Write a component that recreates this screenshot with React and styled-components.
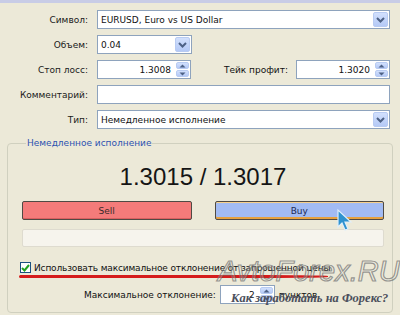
import React from 'react';
import styled, { createGlobalStyle } from 'styled-components';

const GlobalStyle = createGlobalStyle`
  html, body { margin: 0; padding: 0; }
  body {
    background: #ece9d8;
    font-family: "DejaVu Sans", Tahoma, sans-serif;
    font-size: 9px;
    color: #111;
  }
`;

const Window = styled.div`
  position: relative;
  width: 400px;
  height: 315px;
  overflow: hidden;
  background: #ece9d8;
  display: flex;
  flex-direction: column;
`;

const TopStrip = styled.div`
  height: 3px;
  flex-shrink: 0;
  background: #c8cce6;
`;

// верхняя форма: подписи справа, поля слева
const Form = styled.div`
  display: grid;
  grid-template-columns: 88px 1fr;
  column-gap: 9px;
  row-gap: 6px;
  padding: 7px 10px 0 0;
`;

const Label = styled.div`
  text-align: right;
  align-self: center;
  white-space: nowrap;
  color: #1a1a1a;
`;

const Field = styled.div`
  display: flex;
  align-items: center;
  box-sizing: border-box;
  height: 19px;
  flex-shrink: 0;
  width: ${p => (p.$w ? `${p.$w}px` : 'auto')};
  border: 1px solid #8ea3bd;
  background: #fff;
  padding: 0 1px 0 3px;
`;

const FieldText = styled.span`
  flex: 1;
  white-space: nowrap;
  overflow: hidden;
  text-align: ${p => (p.$right ? 'right' : 'left')};
  padding-right: ${p => (p.$right ? '5px' : '0')};
`;

const DropButton = styled.div`
  width: 15px;
  height: 15px;
  box-sizing: border-box;
  border: 1px solid #b8cbf2;
  border-radius: 2px;
  background: linear-gradient(#d2e0fd, #b4c9f6);
  display: flex;
  align-items: center;
  justify-content: center;
`;

const Spin = styled.div`
  width: 13px;
  height: 15px;
  display: flex;
  flex-direction: column;
  gap: 1px;
`;

const SpinHalf = styled.div`
  flex: 1;
  border: 1px solid #b8cbf2;
  border-radius: 2px;
  background: linear-gradient(#d2e0fd, #b4c9f6);
  display: flex;
  align-items: center;
  justify-content: center;
`;

const Pair = styled.div`
  display: flex;
  align-items: center;
`;

const InlineLabel = styled.div`
  flex: 1;
  text-align: right;
  padding-right: 8px;
  white-space: nowrap;
`;

// группа "Немедленное исполнение"
const Group = styled.fieldset`
  margin: 9px 7px 2px 7px;
  padding: 0 8px 0 14px;
  flex: 1;
  min-height: 0;
  border: 1px solid #d0d0bf;
  border-radius: 4px;
  min-width: 0;
  display: flex;
  flex-direction: column;
`;

const Caption = styled.legend`
  color: #2c52b0;
  padding: 0 1px;
  margin-left: 4px;
`;

const Price = styled.div`
  margin-top: 15px;
  text-align: center;
  font-family: "Liberation Sans", Arial, sans-serif;
  font-size: 24px;
  line-height: 28px;
  color: #151515;
`;

const Buttons = styled.div`
  display: grid;
  grid-template-columns: 1fr 1fr;
  column-gap: 23px;
  margin-top: 10px;
`;

const TradeButton = styled.div`
  height: 19px;
  box-sizing: border-box;
  border: 1px solid #4f4a44;
  border-radius: 2px;
  display: flex;
  align-items: center;
  justify-content: center;
  background: ${p => p.$bg};
  color: ${p => p.$fg};
  box-shadow: ${p => (p.$hover ? 'inset 0 -2px 0 #e6a13f, inset 0 1px 0 #f6d08c' : 'inset 0 -1px 0 #d86060')};
`;

const EmptyBar = styled.div`
  height: 18px;
  flex-shrink: 0;
  margin-top: 9px;
  box-sizing: border-box;
  border: 1px solid #dedbcf;
  border-radius: 2px;
  background: #f6f4ed;
`;

const CheckRow = styled.div`
  display: flex;
  align-items: center;
  gap: 3px;
  margin: 15px 0 0 -2px;
  letter-spacing: -0.15px;
`;

const CheckBox = styled.div`
  width: 11px;
  height: 11px;
  box-sizing: border-box;
  border: 1px solid #1c5180;
  background: #fff;
  display: flex;
  align-items: center;
  justify-content: center;
`;

const RedLine = styled.div`
  width: 309px;
  height: 3px;
  flex-shrink: 0;
  margin: 2px 0 0 -3px;
  border-radius: 2px 40% 40% 2px;
  background: #d51c1c;
`;

const DeviationRow = styled.div`
  display: flex;
  align-items: center;
  gap: 4px;
  margin: 7px 0 0 62px;
`;

const Watermark = styled.div`
  position: absolute;
  left: 218px;
  top: 255px;
  font-family: "Liberation Sans", Arial, sans-serif;
  font-style: italic;
  font-size: 29px;
  line-height: 32px;
  color: rgba(255, 255, 255, 0.2);
  -webkit-text-stroke: 1.2px rgba(110, 110, 110, 0.7);
  pointer-events: none;
`;

const Slogan = styled.div`
  position: absolute;
  left: 231px;
  top: 291px;
  font-family: "Liberation Serif", "Times New Roman", serif;
  font-style: italic;
  font-weight: bold;
  font-size: 12.5px;
  color: #4b4f5c;
  pointer-events: none;
`;

const Cursor = styled.svg`
  position: absolute;
  left: 336px;
  top: 208px;
`;

const Chevron = () => (
  <svg width="9" height="6" viewBox="0 0 9 6">
    <path d="M1 1 L4.5 4.5 L8 1" fill="none" stroke="#4d6185" strokeWidth="2" />
  </svg>
);

const Arrow = ({ up }) => (
  <svg width="7" height="4" viewBox="0 0 7 4">
    <path d={up ? 'M0.5 3.5 L3.5 0.5 L6.5 3.5 Z' : 'M0.5 0.5 L3.5 3.5 L6.5 0.5 Z'} fill="#4d6185" />
  </svg>
);

const Combo = ({ value, w }) => (
  <Field $w={w}>
    <FieldText>{value}</FieldText>
    <DropButton><Chevron /></DropButton>
  </Field>
);

const Spinner = ({ value, w }) => (
  <Field $w={w}>
    <FieldText $right>{value}</FieldText>
    <Spin>
      <SpinHalf><Arrow up /></SpinHalf>
      <SpinHalf><Arrow /></SpinHalf>
    </Spin>
  </Field>
);

const App = () => (
  <Window>
    <GlobalStyle />
    <TopStrip />

    <Form>
      <Label>Символ:</Label>
      <Combo value="EURUSD, Euro vs US Dollar" />

      <Label>Объем:</Label>
      <Combo value="0.04" w={95} />

      <Label>Стоп лосс:</Label>
      <Pair>
        <Spinner value="1.3008" w={94} />
        <InlineLabel>Тейк профит:</InlineLabel>
        <Spinner value="1.3020" w={94} />
      </Pair>

      <Label>Комментарий:</Label>
      <Field />

      <Label>Тип:</Label>
      <Combo value="Немедленное исполнение" />
    </Form>

    <Group>
      <Caption>Немедленное исполнение</Caption>
      <Price>1.3015 / 1.3017</Price>
      <Buttons>
        <TradeButton $bg="#f47b7a" $fg="#3a2a2a">Sell</TradeButton>
        <TradeButton $bg="#a2bbf3" $fg="#1d2a55" $hover>Buy</TradeButton>
      </Buttons>
      <EmptyBar />
      <CheckRow>
        <CheckBox>
          <svg width="9" height="8" viewBox="0 0 9 8">
            <path d="M1 4 L3.5 6.5 L8 1" fill="none" stroke="#21a221" strokeWidth="2" />
          </svg>
        </CheckBox>
        <span>Использовать максимальное отклонение от запрошенной цены</span>
      </CheckRow>
      <RedLine />
      <DeviationRow>
        <span>Максимальное отклонение:</span>
        <Spinner value="2" w={55} />
        <span>пунктов</span>
      </DeviationRow>
    </Group>

    <Watermark>AvtoForex.RU</Watermark>
    <Slogan>Как заработать на Форекс?</Slogan>

    <Cursor width="18" height="24" viewBox="0 0 18 24">
      <path d="M2 2 L2 19 L6 15 L9 22 L12 21 L9 14 L15 14 Z" fill="#2f92cf" stroke="#dfeefa" strokeWidth="1.2" />
    </Cursor>
  </Window>
);

export default App;
